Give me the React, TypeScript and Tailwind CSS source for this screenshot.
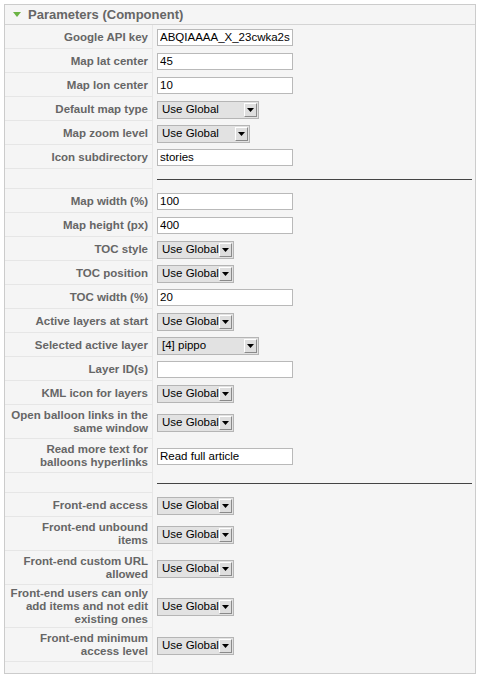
type Row =
  | { kind: "input"; label: string[]; value: string }
  | { kind: "select"; label: string[]; value: string; width: string }
  | { kind: "sep" };

const rows: Row[] = [
  { kind: "input", label: ["Google API key"], value: "ABQIAAAA_X_23cwka2sn80lBqXrnKm3Q" },
  { kind: "input", label: ["Map lat center"], value: "45" },
  { kind: "input", label: ["Map lon center"], value: "10" },
  { kind: "select", label: ["Default map type"], value: "Use Global", width: "w-[102px]" },
  { kind: "select", label: ["Map zoom level"], value: "Use Global", width: "w-[93px]" },
  { kind: "input", label: ["Icon subdirectory"], value: "stories" },
  { kind: "sep" },
  { kind: "input", label: ["Map width (%)"], value: "100" },
  { kind: "input", label: ["Map height (px)"], value: "400" },
  { kind: "select", label: ["TOC style"], value: "Use Global", width: "w-[77px]" },
  { kind: "select", label: ["TOC position"], value: "Use Global", width: "w-[77px]" },
  { kind: "input", label: ["TOC width (%)"], value: "20" },
  { kind: "select", label: ["Active layers at start"], value: "Use Global", width: "w-[77px]" },
  { kind: "select", label: ["Selected active layer"], value: "[4] pippo", width: "w-[102px]" },
  { kind: "input", label: ["Layer ID(s)"], value: "" },
  { kind: "select", label: ["KML icon for layers"], value: "Use Global", width: "w-[77px]" },
  { kind: "select", label: ["Open balloon links in the", "same window"], value: "Use Global", width: "w-[77px]" },
  { kind: "input", label: ["Read more text for", "balloons hyperlinks"], value: "Read full article" },
  { kind: "sep" },
  { kind: "select", label: ["Front-end access"], value: "Use Global", width: "w-[77px]" },
  { kind: "select", label: ["Front-end unbound", "items"], value: "Use Global", width: "w-[77px]" },
  { kind: "select", label: ["Front-end custom URL", "allowed"], value: "Use Global", width: "w-[77px]" },
  {
    kind: "select",
    label: ["Front-end users can only", "add items and not edit", "existing ones"],
    value: "Use Global",
    width: "w-[77px]",
  },
  { kind: "select", label: ["Front-end minimum", "access level"], value: "Use Global", width: "w-[77px]" },
];

// row heights by number of label lines
const rowHeight = ["h-[24px]", "h-[24px]", "h-[34px]", "h-[43px]"];

function FakeSelect({ value, width }: { value: string; width: string }) {
  return (
    <div className={`flex h-[18px] items-center border border-[#b5b5b5] bg-[#e2e2e2] ${width}`}>
      <span className="flex-1 truncate pl-[4px] text-[11.5px] leading-none text-black">{value}</span>
      <span className="mr-[1px] flex h-[14px] w-[13px] items-center justify-center border border-t-white border-l-white border-r-[#8a8a8a] border-b-[#8a8a8a] bg-[#dedede]">
        <svg width="7" height="4" viewBox="0 0 7 4">
          <path d="M0 0h7L3.5 4z" fill="#000" />
        </svg>
      </span>
    </div>
  );
}

export default function App() {
  return (
    <div className="h-[677px] w-[482px] bg-white pl-[4px] pt-[4px] font-['Liberation_Sans',Arial,sans-serif]">
      <div className="w-[472px] border border-[#cccccc] bg-[#f5f5f5]">
        {/* Panel title */}
        <div className="flex h-[20px] items-center border-b border-[#d4d4d4] bg-[#f5f5f5]">
          <svg className="ml-[8px] mr-[7px]" width="8" height="5" viewBox="0 0 8 5">
            <path d="M0 0h8L4 5z" fill="#6bb344" />
          </svg>
          <h3 className="text-[13px] font-bold text-[#666666]">Parameters (Component)</h3>
        </div>

        {/* Param list */}
        <div className="flex flex-col">
          {rows.map((row, i) => {
            if (row.kind === "sep") {
              return (
                <div key={i} className="flex h-[20px]">
                  <div className="w-[148px] border-b border-r border-[#e6e6e6]" />
                  <div className="flex flex-1 items-center pl-[4px] pr-[3px]">
                    <div className="h-px w-full bg-[#444444]" />
                  </div>
                </div>
              );
            }
            return (
              <div key={i} className={`flex ${rowHeight[row.label.length]}`}>
                <div className="flex w-[148px] flex-col items-end justify-center border-b border-r border-[#e6e6e6] pt-[1px] pr-[4px] text-right text-[11.5px] font-bold leading-[13px] text-[#666666]">
                  {row.label.map((l) => (
                    <span key={l}>{l}</span>
                  ))}
                </div>
                <div className="flex flex-1 items-center pl-[4px] pt-[1px]">
                  {row.kind === "input" ? (
                    <input
                      readOnly
                      value={row.value}
                      className="h-[17px] w-[136px] border border-[#b9b9b9] bg-white px-[2px] text-[11.5px] text-black outline-none"
                    />
                  ) : (
                    <FakeSelect value={row.value} width={row.width} />
                  )}
                </div>
              </div>
            );
          })}
          <div className="flex h-[11px]">
            <div className="w-[148px] border-r border-[#e6e6e6]" />
          </div>
        </div>
      </div>
    </div>
  );
}
